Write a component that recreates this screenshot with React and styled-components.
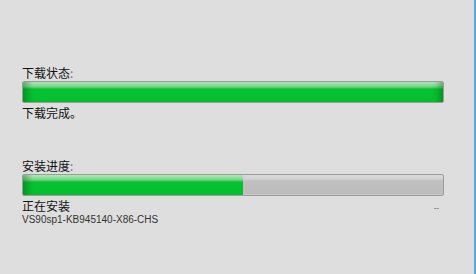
import React from 'react';
import styled, { createGlobalStyle } from 'styled-components';

const Global = createGlobalStyle`
  html, body {
    margin: 0;
    padding: 0;
    background: #dedede;
  }
`;

const Panel = styled.div`
  width: 476px;
  height: 274px;
  background: #dedede;
  border-right: 2px solid #5aa8d8;
  padding: 65px 30px 0 22px;
  box-sizing: border-box;
  display: flex;
  flex-direction: column;
  font-family: "Liberation Sans", "Noto Sans CJK SC", sans-serif;
  color: #111;
`;

const Section = styled.div`
  display: flex;
  flex-direction: column;
  margin-bottom: ${p => p.gap || 0}px;
`;

const Label = styled.div`
  font-family: "Noto Sans CJK SC", sans-serif;
  font-size: 12px;
  line-height: 16px;
  height: 16px;
  color: #111;
`;

const Colon = styled.span`
  color: #8a6a7a;
`;

const Track = styled.div`
  position: relative;
  height: 20px;
  border: 1px solid #9c9c9c;
  border-radius: 2px;
  overflow: hidden;
  background: linear-gradient(to bottom, #dadada 0, #d2d2d2 4px, #c0c0c0 6px, #bcbcbc 100%);
  box-shadow: inset 0 -1px 0 #c8c8c8;
  margin-bottom: 2px;
`;

const Fill = styled.div`
  height: 100%;
  background:
    linear-gradient(to right, rgba(0, 70, 10, 0.35), rgba(0, 70, 10, 0) 10px),
    linear-gradient(to bottom, #b3e6b9 0, #8fdc9b 3px, #6cd47e 5px, #06c232 7px, #04bf2e 100%);
  box-shadow: ${p => (p.full ? 'inset -8px 0 6px -4px rgba(0, 70, 10, 0.35)' : 'none')};
`;

const StatusRow = styled.div`
  display: flex;
  justify-content: space-between;
  align-items: center;
  height: 16px;
`;

const Status = styled.span`
  font-family: "Noto Sans CJK SC", sans-serif;
  font-size: 12px;
  line-height: 16px;
  color: #111;
`;

const Dash = styled.span`
  font-family: "Liberation Sans", sans-serif;
  font-size: 8px;
  color: #555;
  margin-right: 5px;
  padding-top: 3px;
`;

const Package = styled.div`
  font-family: "Liberation Sans", sans-serif;
  font-size: 10px;
  line-height: 12px;
  color: #333;
`;

const ProgressBar = ({ value }) => (
  <Track>
    <Fill full={value >= 100} style={{ width: `${value}%` }} />
  </Track>
);

export default function App() {
  return (
    <>
      <Global />
      <Panel>
        <Section gap={37}>
          <Label>下载状态<Colon>:</Colon></Label>
          <ProgressBar value={100} />
          <StatusRow>
            <Status>下载完成。</Status>
          </StatusRow>
        </Section>
        <Section>
          <Label>安装进度<Colon>:</Colon></Label>
          <ProgressBar value={52.3} />
          <StatusRow>
            <Status>正在安装</Status>
            <Dash>--</Dash>
          </StatusRow>
          <Package>VS90sp1-KB945140-X86-CHS</Package>
        </Section>
      </Panel>
    </>
  );
}
